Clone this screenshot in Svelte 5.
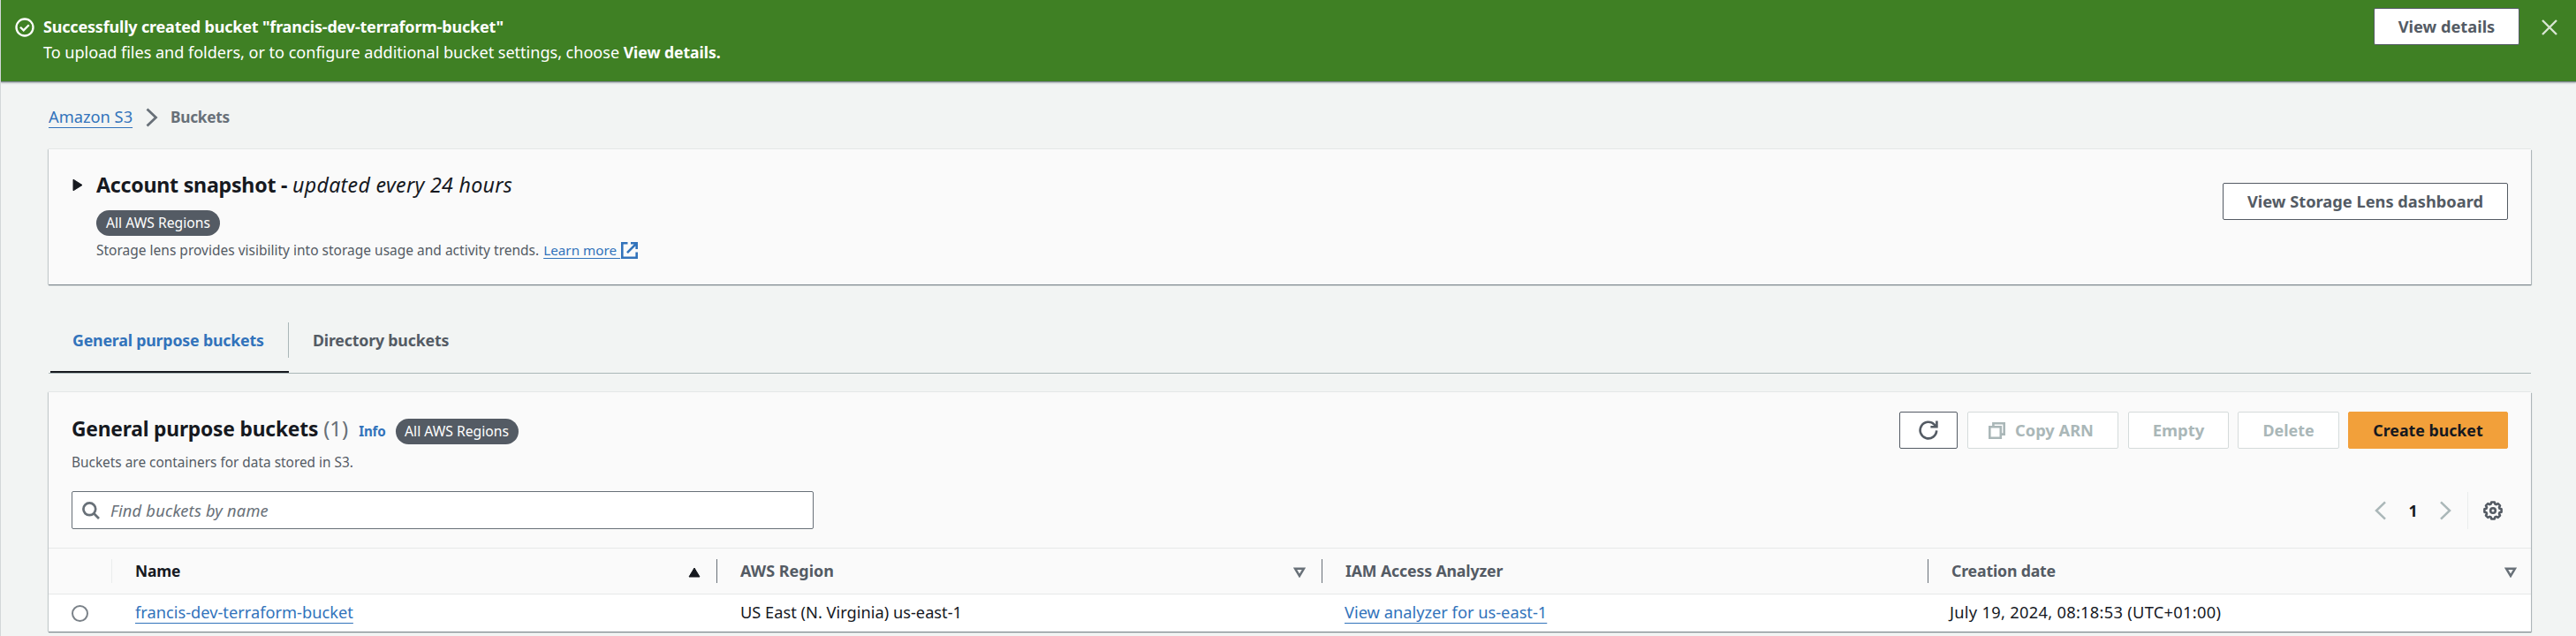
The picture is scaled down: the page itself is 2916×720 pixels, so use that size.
<script>
  const columns = [
    { title: 'Name', cls: 'name', sort: 'asc', size: 17.4, track: -0.2 },
    { title: 'AWS Region', cls: 'region', sort: 'none', size: 18, track: 0 },
    { title: 'IAM Access Analyzer', cls: 'iam', sort: null, size: 17.7, track: -0.13 },
    { title: 'Creation date', cls: 'created', sort: 'none', size: 17.7, track: -0.17 }
  ];
</script>

<div class="page">
  <header class="flash">
    <svg class="status" width="22" height="22" viewBox="0 0 22 22" fill="none" stroke="#fff" stroke-width="2.3">
      <circle cx="11" cy="11" r="9.5" />
      <path d="M6 10.8l3.7 3.6 6.1-6.1" />
    </svg>
    <div class="message">
      <div class="first">Successfully created bucket "francis-dev-terraform-bucket"</div>
      <div>To upload files and folders, or to configure additional bucket settings, choose <b>View details.</b></div>
    </div>
    <button class="btn flash-btn">View details</button>
    <svg class="close" width="18" height="18" viewBox="0 0 18 18" stroke="#d9e6d3" stroke-width="2.4">
      <path d="M1 1l16 16M17 1L1 17" />
    </svg>
  </header>

  <main>
    <nav class="crumbs">
      <a class="link" href="#s3">Amazon S3</a>
      <svg width="14" height="22" viewBox="0 0 14 22" fill="none" stroke="#687078" stroke-width="2.8"><path d="M1.5 1.5L11.5 11 1.5 20.5" /></svg>
      <span>Buckets</span>
    </nav>

    <section class="card snapshot">
      <svg class="caret" width="12" height="15" viewBox="0 0 12 15"><path d="M1 1.2L11 7.5 1 13.8z" fill="#16191f" stroke="#16191f" stroke-linejoin="round" /></svg>
      <div class="snap-body">
        <h2>Account snapshot - <i>updated every 24 hours</i></h2>
        <span class="pill">All AWS Regions</span>
        <p>
          <span>Storage lens provides visibility into storage usage and activity trends.</span>
          <a class="link" href="#more">Learn more&nbsp;</a>
          <svg width="19" height="19" viewBox="0 0 19 19" fill="none" stroke="#3273bb" stroke-width="2.6">
            <path d="M7.5 1.3H1.3v16.4h16.4V11.5" />
            <path d="M11 1.3h6.7V8M17.4 1.6L7 12.2" />
          </svg>
        </p>
      </div>
      <button class="btn lens">View Storage Lens dashboard</button>
    </section>

    <div class="tabs">
      <div class="tab active"><span>General purpose buckets</span></div>
      <div class="tab"><span>Directory buckets</span></div>
    </div>

    <section class="card table-card">
      <div class="top">
        <div>
          <div class="title">
            <h2>General purpose buckets</h2>
            <span class="count">(1)</span>
            <span class="info">Info</span>
            <span class="pill">All AWS Regions</span>
          </div>
          <p class="desc">Buckets are containers for data stored in S3.</p>
        </div>
        <div class="actions">
          <button class="btn refresh" aria-label="Refresh">
            <svg width="22" height="22" viewBox="0 0 22 22" fill="none" stroke="#545b64" stroke-width="2.6">
              <path d="M20.2 11.4A9.3 9.3 0 1 1 17.6 4.6L20 7" />
              <path d="M20.4 0.6V7.2H13.4" />
            </svg>
          </button>
          <button class="btn off copy">
            <svg width="19" height="19" viewBox="0 0 19 19" fill="none" stroke="#aab7b8" stroke-width="2.6">
              <path d="M1.3 5.2h12.5v12.5H1.3z" />
              <path d="M5.4 5V1.3h12.3v12.3H14" />
            </svg>
            Copy ARN
          </button>
          <button class="btn off empty">Empty</button>
          <button class="btn off delete">Delete</button>
          <button class="btn primary">Create bucket</button>
        </div>
      </div>

      <div class="tools">
        <div class="search">
          <svg width="20" height="20" viewBox="0 0 20 20" fill="none" stroke="#687078" stroke-width="2.7">
            <circle cx="8.3" cy="8.3" r="6.9" /><path d="M13.2 13.2l5.8 5.8" />
          </svg>
          <i>Find buckets by name</i>
        </div>
        <div class="pager">
          <svg width="13" height="22" viewBox="0 0 13 22" fill="none" stroke="#aab7b8" stroke-width="2.5"><path d="M12 1.3L2 11l10 9.7" /></svg>
          <b>1</b>
          <svg width="13" height="22" viewBox="0 0 13 22" fill="none" stroke="#aab7b8" stroke-width="2.5"><path d="M1 1.3L11 11 1 20.7" /></svg>
          <div class="settings">
            <svg width="22" height="22" viewBox="0 0 22 22" fill="none" stroke="#545b64" stroke-width="2.6" stroke-linejoin="round">
              <path d="M9.2 1.5h3.6l.6 2.1 1.3.5 2-1 2.3 2.3-1 2 .5 1.3 2.1.6v3.4l-2.1.6-.5 1.3 1 2-2.3 2.3-2-1-1.3.5-.6 2.1H9.2l-.6-2.1-1.3-.5-2 1L3 16.6l1-2-.5-1.3-2.1-.6V9.3l2.1-.6.5-1.3-1-2 2.3-2.3 2 1 1.3-.5z" />
              <circle cx="11" cy="11" r="2.8" />
            </svg>
          </div>
        </div>
      </div>

      <div class="grid head">
        <div class="check"></div>
        {#each columns as col}
          <div class="th {col.cls}">
            <span style="font-size:{col.size}px;letter-spacing:{col.track}px">{col.title}</span>
            {#if col.sort === 'asc'}
              <svg width="14" height="12" viewBox="0 0 14 12"><path d="M7 1l6 10H1z" fill="#16191f" stroke="#16191f" stroke-linejoin="round" /></svg>
            {:else if col.sort}
              <svg width="14" height="12" viewBox="0 0 14 12"><path d="M2 1.7h10L7 10z" fill="none" stroke="#687078" stroke-width="2.5" /></svg>
            {/if}
          </div>
        {/each}
      </div>
      <div class="grid row">
        <div class="check"><span class="radio"></span></div>
        <div class="td"><a class="link" href="#bucket">francis-dev-terraform-bucket</a></div>
        <div class="td">US East (N. Virginia) us-east-1</div>
        <div class="td analyzer"><a class="link" href="#analyzer">View analyzer for us-east-1</a></div>
        <div class="td date">July 19, 2024, 08:18:53 (UTC+01:00)</div>
      </div>
    </section>
  </main>
</div>

<style>
  :global(body) { background: #f2f4f3; }
  .page, .page * { box-sizing: border-box; }
  .page {
    width: 2916px; height: 720px; overflow: hidden;
    border-left: 1px solid #d3d7d8;
    background: #f2f4f3; color: #16191f;
    font-family: "Noto Sans", "Open Sans", sans-serif; font-size: 18.25px;
    white-space: nowrap;
  }
  h2, p { margin: 0; }
  svg { display: block; flex: none; }
  .flash {
    display: flex; align-items: flex-start; height: 92px;
    background: #3f8024; color: #fff;
    box-shadow: 0 1px 1px #7d878d, 0 2px 2px #b4babd;
    position: relative;
  }
  .status { margin: 20px 10px 0 16px; }
  .message { padding-top: 16px; line-height: 29px; flex: 1; font-size: 18.13px; letter-spacing: -0.04px; }
  .first { font-weight: 700; font-size: 18px; letter-spacing: -0.19px; }
  .message b { font-size: 17.6px; letter-spacing: -0.05px; }
  .btn {
    height: 42px; padding: 0 0 1px; border: 1px solid #545b64; border-radius: 2px;
    background: #fff; color: #545b64; font: 700 18.25px "Noto Sans", sans-serif;
    display: flex; align-items: center; justify-content: center; flex: none;
    white-space: nowrap;
  }
  .flash-btn { width: 165px; margin-top: 9px; }
  .close { margin: 22px 21px 0 25px; }

  main { padding: 25px 51px 0 54px; }
  .crumbs { display: flex; align-items: center; height: 30px; }
  .crumbs a { margin-top: -1px; }
  .crumbs svg { margin: 2px 14px 0 15px; }
  .crumbs span { color: #687078; font-weight: 700; font-size: 17.3px; letter-spacing: -0.3px; }
  .link {
    color: #3273bb; text-decoration: underline; text-decoration-thickness: 1px;
    text-underline-offset: 5px; text-decoration-skip-ink: none;
  }

  .card {
    background: #fafafa;
    box-shadow: 0 1px 1px #7d878d, 1px 1px 1px #b9c0c2, -1px 0 1px #d0d5d6, 0 -1px 0 #e9ebeb;
  }
  .snapshot { display: flex; align-items: flex-start; height: 153px; margin-top: 22px; padding: 25px 26px 0 27px; }
  .caret { margin: 8px 15px 0 0; }
  .snap-body { flex: 1; }
  h2 { font-size: 23.2px; line-height: 30px; font-weight: 700; letter-spacing: -0.25px; }
  h2 i { font-weight: 400; letter-spacing: 0.3px; }
  .pill {
    display: block; width: 140px; height: 29px; line-height: 28px; border-radius: 15px;
    background: #545b64; color: #fff; font-size: 15.7px; text-align: center;
  }
  .snapshot .pill { margin-top: 14px; }
  .snapshot p { display: flex; align-items: flex-start; margin-top: 4px; line-height: 24px; font-size: 15.5px; color: #545b64; }
  .snapshot p .link { margin-left: 5px; font-size: 15.27px; text-underline-offset: 3px; }
  .snapshot p svg { margin: 3px 0 0 1px; }
  .lens { width: 323px; margin-top: 13px; }

  .tabs { display: flex; height: 60px; margin: 41px 0 21px; border-bottom: 1px solid #aab7b8; padding-left: 2px; }
  .tab { position: relative; height: 59px; font-weight: 700; font-size: 17.8px; letter-spacing: -0.2px; color: #545b64; padding: 0 27px; }
  .tab span { display: block; line-height: 40px; margin-top: 2px; }
  .tab.active { width: 270px; padding: 0 0 0 25px; border-bottom: 2px solid #16191f; color: #3273bb; }
  .tab.active::after { content: ""; position: absolute; right: 0; top: 2px; width: 1px; height: 40px; background: #aab7b8; }

  .table-card { height: 271px; }
  .top { display: flex; justify-content: space-between; height: 112px; padding: 22px 26px 0 26px; }
  .title { display: flex; align-items: baseline; margin-top: 4px; height: 36px; }
  .title h2 { font-size: 22.8px; letter-spacing: -0.2px; }
  .count { margin-left: 6px; font-size: 23.9px; line-height: 30px; color: #687078; }
  .info { margin: 0 11px 0 12px; color: #3273bb; font-weight: 700; font-size: 15.2px; letter-spacing: -0.2px; }
  .title .pill { width: 139px; }
  .desc { margin-top: 6px; line-height: 24px; font-size: 15.4px; color: #545b64; }
  .actions { display: flex; gap: 11px; }
  .refresh { width: 66px; }
  .off { border-color: #d5dbdb; color: #aab7b8; }
  .copy { width: 171px; gap: 11px; padding-right: 4px; }
  .copy svg { margin-top: 1px; }
  .empty { width: 114px; font-size: 18.5px; }
  .delete { width: 115px; font-size: 17.9px; margin-left: -1px; }
  .primary { width: 181px; margin-left: -1px; border-color: #f2a03a; background: #f2a03a; color: #16191f; font-size: 17.75px; }

  .tools { display: flex; justify-content: space-between; height: 64px; padding: 0 32px 0 26px; }
  .search {
    display: flex; align-items: center; gap: 12px; width: 840px; height: 43px; padding: 0 0 0 11px;
    border: 1px solid #687078; border-radius: 2px; background: #fff;
    font-size: 18.3px; letter-spacing: 0.2px; color: #687078;
  }
  .pager { display: flex; align-items: center; height: 43px; }
  .pager b { width: 61px; text-align: center; font-size: 17.8px; }
  .settings { display: flex; align-items: center; height: 42px; margin-left: 18px; padding-left: 17px; border-left: 1px solid #eaeded; }

  .grid { display: grid; grid-template-columns: 71px 685px 685px 686px 1fr; border-top: 1px solid #e6e9e9; align-items: center; }
  .head { height: 52px; }
  .th { display: flex; align-items: center; justify-content: space-between; height: 27px; padding: 0 18px 0 26px; border-left: 1px solid #687078; color: #545b64; font-weight: 700; }
  .th span { margin-top: -1px; }
  .th svg { margin-top: 2px; }
  .th.name { border-left-color: #eaeded; color: #16191f; }
  .th.created { padding: 0 16px 0 26px; }
  .row { height: 43px; background: #fff; }
  .td { padding: 0 0 3px 27px; }
  .analyzer { padding-left: 26px; }
  .date { padding-left: 25px; letter-spacing: 0.3px; }
  .radio { display: block; width: 19px; height: 19px; margin-left: 26px; border: 2px solid #7b8289; border-radius: 50%; background: #fff; }
</style>
